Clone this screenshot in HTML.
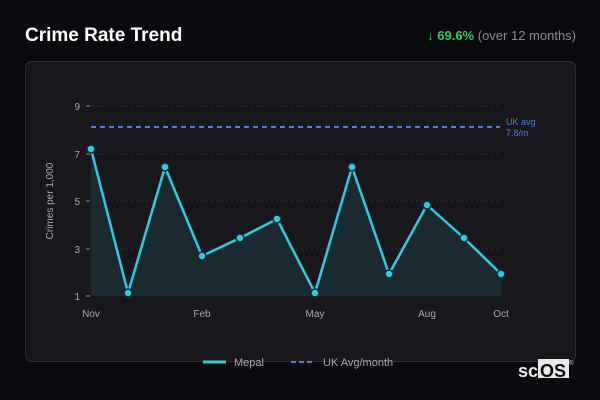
<!DOCTYPE html>
<html><head><style>
body{margin:0;width:600px;height:400px;background:#0b0b0f;font-family:"Liberation Sans","DejaVu Sans",sans-serif;position:relative;overflow:hidden}
.t{position:absolute;left:25px;top:25px;color:#fff;font-weight:bold;font-size:19px}
.r{position:absolute;right:24px;top:28px;font-size:13px;color:#8a8a90}
.r b{color:#34c759}
.card{position:absolute;left:25px;top:61px;width:549px;height:299px;background:#18181c;border:1px solid #2c2c32;border-radius:7px}
svg{position:absolute;left:0;top:0}
</style></head><body>
<div class="t">Crime Rate Trend</div>
<div class="r"><b>↓ 69.6%</b> (over 12 months)</div>
<div class="card"></div>
<svg width="600" height="400" font-family="Liberation Sans, DejaVu Sans, sans-serif">
<g stroke="#2e2e34" stroke-dasharray="2 3" stroke-width="1">
<line x1="91" y1="106" x2="500" y2="106"/><line x1="91" y1="154" x2="500" y2="154"/><line x1="91" y1="201" x2="500" y2="201"/><line x1="91" y1="249" x2="500" y2="249"/>
</g>
<g stroke="#888" stroke-width="1"><line x1="86" y1="106" x2="90" y2="106"/><line x1="86" y1="154" x2="90" y2="154"/><line x1="86" y1="201" x2="90" y2="201"/><line x1="86" y1="249" x2="90" y2="249"/><line x1="86" y1="296" x2="90" y2="296"/></g>
<g fill="#aaa" font-size="10" text-anchor="end"><text x="80" y="110">9</text><text x="80" y="158">7</text><text x="80" y="205">5</text><text x="80" y="253">3</text><text x="80" y="300">1</text></g>
<text transform="translate(53,201) rotate(-90)" fill="#aaa" font-size="10" text-anchor="middle">Crimes per 1,000</text>
<g fill="#aaa" font-size="10" text-anchor="middle"><text x="91" y="317">Nov</text><text x="202" y="317">Feb</text><text x="315" y="317">May</text><text x="427" y="317">Aug</text><text x="501" y="317">Oct</text></g>
<polygon fill="#1b2a30" points="91,149 128,293 165,167 202,256 240,238 277,219 315,293 352,167 389,274 427,205 464,238 501,274 501,296 91,296"/>
<line x1="91" y1="127" x2="500" y2="127" stroke="#4a7ee0" stroke-width="2" stroke-dasharray="5 4"/>
<text x="506" y="125" fill="#4a7ee0" font-size="9">UK avg</text><text x="506" y="136" fill="#4a7ee0" font-size="9">7.8/m</text>
<polyline fill="none" stroke="#2ecbe4" stroke-width="2.5" stroke-linejoin="round" points="91,149 128,293 165,167 202,256 240,238 277,219 315,293 352,167 389,274 427,205 464,238 501,274"/>
<g fill="#2ecbe4" stroke="#0f2a30" stroke-width="1.5">
<circle cx="91" cy="149" r="4"/><circle cx="128" cy="293" r="4"/><circle cx="165" cy="167" r="4"/><circle cx="202" cy="256" r="4"/><circle cx="240" cy="238" r="4"/><circle cx="277" cy="219" r="4"/><circle cx="315" cy="293" r="4"/><circle cx="352" cy="167" r="4"/><circle cx="389" cy="274" r="4"/><circle cx="427" cy="205" r="4"/><circle cx="464" cy="238" r="4"/><circle cx="501" cy="274" r="4"/>
</g>
<line x1="203" y1="362" x2="226" y2="362" stroke="#2ecbe4" stroke-width="3"/>
<text x="234" y="366" fill="#aaa" font-size="11">Mepal</text>
<line x1="291" y1="362" x2="315" y2="362" stroke="#4a7ee0" stroke-width="2" stroke-dasharray="5 3"/>
<text x="323" y="366" fill="#aaa" font-size="11">UK Avg/month</text>
<rect x="538" y="359" width="31" height="19" fill="#e8e8e8"/>
<text x="518" y="377" fill="#e8e8e8" font-size="18" font-weight="bold">sc</text>
<text x="540" y="377" fill="#0b0b0f" font-size="18" font-weight="bold">OS</text>
<text x="569" y="365" fill="#ccc" font-size="6">®</text>
</svg>
</body></html>
